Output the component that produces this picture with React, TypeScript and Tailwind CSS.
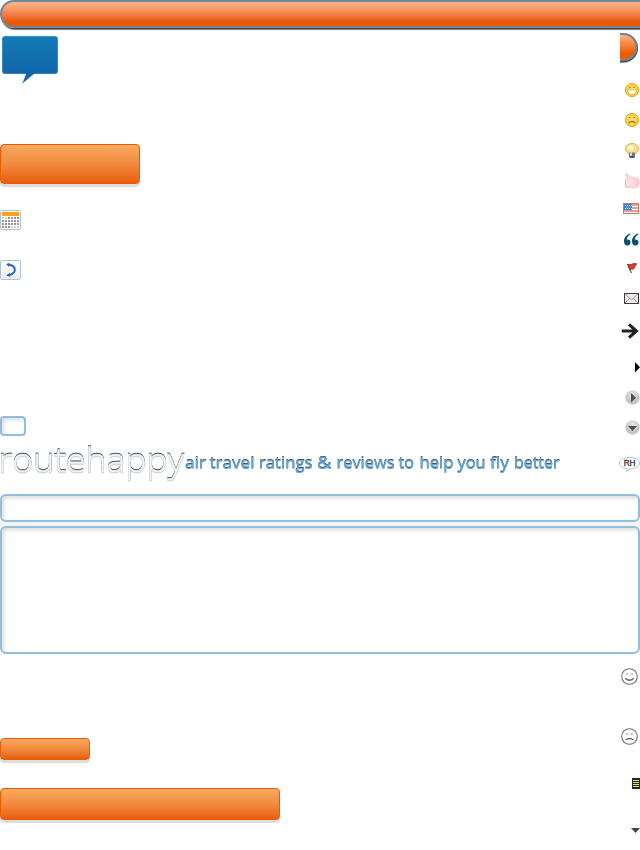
import type { ReactNode } from 'react';

const TAGLINE = [
  { word: 'air', x: 0, w: 21 },
  { word: 'travel', x: 24.5, w: 45 },
  { word: 'ratings', x: 74, w: 53.5 },
  { word: '&', x: 132, w: 14.5 },
  { word: 'reviews', x: 151.5, w: 58 },
  { word: 'to', x: 213.5, w: 15.5 },
  { word: 'help', x: 234.5, w: 34 },
  { word: 'you', x: 272.5, w: 28 },
  { word: 'fly', x: 305, w: 19 },
  { word: 'better', x: 329, w: 45.5 },
];

function Icon({ top, h, children }: { top: number; h: number; children: ReactNode }) {
  return (
    <svg className="block shrink-0" width="24" height={h} viewBox={`616 ${top} 24 ${h}`} fill="none">
      {children}
    </svg>
  );
}

function Button({ className }: { className: string }) {
  return (
    <div
      className={`shrink-0 rounded border border-[#e95b04] bg-linear-to-b from-[#f9aa60] via-[#f08a3b] to-[#e85e08] shadow-[0_3px_0_#dedede] ${className}`}
    />
  );
}

function Field({ className }: { className: string }) {
  return (
    <div
      className={`shrink-0 border-2 border-[#93bedb] bg-white shadow-[inset_2px_2px_4px_#dcdcdc] ${className}`}
    />
  );
}

function Calendar() {
  return (
    <svg className="mt-[26px] block shrink-0" width="21" height="20" viewBox="0 0 21 20">
      <rect x=".5" y=".5" width="20" height="19" rx="1.5" fill="#fff" stroke="#b1c3cf" />
      <rect x="2" y="2" width="17" height="4" fill="#fba11c" />
      {[0, 1, 2, 3].map((r) =>
        [0, 1, 2, 3, 4, 5].map((c) => (
          <rect
            key={`${r}-${c}`}
            x={2 + c * 3}
            y={7 + r * 3}
            width="2"
            height="2"
            fill={(r === 0 && c < 2) || (r === 3 && c > 2) ? '#d9d2d0' : '#989696'}
          />
        )),
      )}
    </svg>
  );
}

function Back() {
  return (
    <svg className="mt-[30px] block shrink-0" width="21" height="20" viewBox="0 0 21 20">
      <defs>
        <linearGradient id="back" x2="0" y2="1">
          <stop stopColor="#fff" />
          <stop offset="1" stopColor="#ececee" />
        </linearGradient>
      </defs>
      <rect x=".5" y=".5" width="20" height="19" rx="1.5" fill="url(#back)" stroke="#b1c3cf" />
      <path d="M8.5 4.7C13 5 14.8 7.3 14.8 9.8S13 14.3 8.5 15" fill="none" stroke="#2d68bd" strokeWidth="2" />
      <path d="M6 4l4-1-1 4zM6 15.7l3.6-3 1 4z" fill="#2d68bd" />
    </svg>
  );
}

function Bubble() {
  return (
    <svg className="mt-1 ml-px block shrink-0" width="59" height="50" viewBox="1 35 59 50">
      <defs>
        <linearGradient id="bubble" x2="0" y2="1">
          <stop stopColor="#147bb8" />
          <stop offset="1" stopColor="#1060a6" />
        </linearGradient>
      </defs>
      <path
        d="M5 36h50q3 0 3 3v32q0 3-3 3H34L22 84l4-10H5q-3 0-3-3V39q0-3 3-3z"
        fill="url(#bubble)"
        stroke="#cbdbe8"
        strokeWidth=".5"
      />
    </svg>
  );
}

function Brand() {
  return (
    <div className="mt-[6px] flex h-[44px] w-[600px] shrink-0">
      <svg className="block shrink-0 overflow-visible" width="185" height="44">
        <text
          x="-1.5"
          y="30"
          textLength="185.5"
          lengthAdjust="spacingAndGlyphs"
          fontFamily='"Open Sans", "Noto Sans", sans-serif'
          fontSize="33.5"
          fontWeight="300"
          fill="#f4f5f6"
          stroke="#f4f5f6"
          strokeWidth=".6"
          className="[filter:drop-shadow(0_-1px_0_#31485b)_drop-shadow(0_1px_0_#c6c9cc)]"
        >
          routehappy
        </text>
      </svg>
      <svg className="block shrink-0 overflow-visible" width="380" height="44">
        <text
          y="27"
          fontFamily='"Open Sans", "Noto Sans", sans-serif'
          fontSize="17"
          fontWeight="400"
          fill="#6aa9d6"
          stroke="#6aa9d6"
          strokeWidth=".2"
          className="[filter:drop-shadow(0_-1px_0_#38546d)]"
        >
          {TAGLINE.map(({ word, x, w }) => (
            <tspan key={word} x={x} textLength={w} lengthAdjust="spacingAndGlyphs">
              {word}
            </tspan>
          ))}
        </text>
      </svg>
    </div>
  );
}

function Face({ cy, sad }: { cy: number; sad?: boolean }) {
  return (
    <>
      <circle cx="632" cy={cy} r="6.7" fill="url(#gold)" stroke="#dba92c" strokeWidth=".9" />
      <path d={`M629 ${cy - 2.5}h1.6M633.4 ${cy - 2.5}h1.6`} stroke="#a57f22" strokeWidth="1" />
      {sad ? (
        <path d={`M628.6 ${cy + 3}q3.4-3.4 6.8 0`} stroke="#98700f" strokeWidth="1.2" />
      ) : (
        <path d={`M627.5 ${cy}h9q-.6 4.5-4.5 4.5t-4.5-4.5z`} fill="#fff" stroke="#c99a2a" strokeWidth=".6" />
      )}
    </>
  );
}

function OutlineFace({ cy, sad }: { cy: number; sad?: boolean }) {
  return (
    <>
      <circle cx="629.5" cy={cy} r="7.8" stroke="#707070" strokeWidth="1.1" />
      <path d={`M626.3 ${cy - 2.5}h1.4M631.2 ${cy - 2.5}h1.4`} stroke="#666" strokeWidth="1.2" />
      <path
        d={sad ? `M625.5 ${cy + 3.6}q4-3.2 8 0` : `M625.2 ${cy + 1.7}q4.3 4 8.6 0`}
        stroke="#666"
        strokeWidth="1.3"
      />
    </>
  );
}

function IconColumn() {
  return (
    <div className="flex w-6 shrink-0 flex-col">
      <Icon top={31} h={44}>
        <defs>
          <linearGradient id="cap" x2="0" y2="1">
            <stop stopColor="#ffb98a" />
            <stop offset=".75" stopColor="#e95a04" />
            <stop offset="1" stopColor="#e95a04" />
          </linearGradient>
          <radialGradient id="gold">
            <stop stopColor="#ffea80" />
            <stop offset="1" stopColor="#f5c735" />
          </radialGradient>
          <radialGradient id="disc" cy=".3">
            <stop stopColor="#e9e9e9" />
            <stop offset="1" stopColor="#c4c4c4" />
          </radialGradient>
        </defs>
        <path d="M620 35.5h3.5a13 13 0 0 1 0 26.5H620" stroke="#aaa" strokeWidth="2" />
        <path d="M620 35h3.8a13 13 0 0 1 0 26H620" stroke="#454951" strokeWidth="2.4" />
        <path d="M620 34h3.5a13 13 0 0 1 0 26H620z" fill="url(#cap)" />
        <path d="M620 34h3.5a13 13 0 0 1 0 26H620" stroke="#758591" strokeWidth="2" />
      </Icon>
      <Icon top={75} h={30}><Face cy={90} /></Icon>
      <Icon top={105} h={30}><Face cy={120} sad /></Icon>
      <Icon top={135} h={32}>
        <path d="M632 143.5c-3.8 0-6.5 2.2-6.5 5.2 0 2.8 3 3.8 3.7 6h5.6c.7-2.2 3.7-3.2 3.7-6 0-3-2.7-5.2-6.5-5.2z" fill="#fde08a" stroke="#dfaa4e" />
        <ellipse cx="630.5" cy="147.5" rx="2.8" ry="2.3" fill="#fff9dc" />
        <path d="M629 152.5h6v4.2l-1.3 1.3h-3.4l-1.3-1.3z" fill="#777" />
        <path d="M630 152.5h2v3.3h-2z" fill="#ddd" />
        <path d="M629.5 157h5" stroke="#333" />
      </Icon>
      <Icon top={167} h={30}>
        <path d="M626 174c1.5-.6 3.2 2.3 4.9 3.9h5.8c1.9 0 1.9 2 .8 2.3 2.1.1 2 2.2.6 2.3 1.5.3 1.1 2.2-.3 2.2.9.5.6 2.1-.8 2.4-2.2.7-4.7.5-6.3-.3l-3.2.8-2-.6v-6.8l2.2-.6c0-2-2.7-4.2-1.7-5.6z" fill="#ffdfe3" stroke="#f7a6b0" strokeWidth=".8" />
        <path d="M634.5 180.2h3M634.5 182.5h3.2M634.5 184.7h3" stroke="#f7a6b0" strokeWidth=".6" />
      </Icon>
      <Icon top={197} h={26}>
        <rect x="623.5" y="203.5" width="15" height="10" fill="#fff" stroke="#b98570" />
        <path d="M624 205h14M624 208h14M624 211h14" stroke="#ea7a68" strokeWidth="1.3" />
        <path d="M624 204h8v6h-8z" fill="#397bc6" />
        <path d="M625 205.5h7M625 208.5h7" stroke="#d9e9ff" strokeDasharray="1 1" />
        <path d="M626 207h6" stroke="#d9e9ff" strokeWidth=".7" strokeDasharray="1 1" />
      </Icon>
      <Icon top={223} h={32}>
        {[0, 8].map((dx) => (
          <path
            key={dx}
            transform={`translate(${dx} 0)`}
            d="M630.2 233.5c-4 1.3-6.2 4.4-6.2 7.7 0 2.7 1.3 4.3 3.3 4.3 1.9 0 3.2-1.3 3.2-3 0-1.8-1.2-2.9-2.7-2.9-.4 0-.8.1-1 .2.1-2.1 1.3-4 3.6-5.3z"
            fill="#075078"
          />
        ))}
      </Icon>
      <Icon top={255} h={28}>
        <path d="M627.5 264l4 9" stroke="#675a55" strokeWidth="1.2" />
        <path d="M627.8 264.3c3 1.6 4.4-1.7 9-.5-1.9 1.7-1.4 3.5-3.7 5.7-1-.7-2.3-.3-3.3.2z" fill="#d5432e" stroke="#7a2c24" strokeWidth=".8" />
      </Icon>
      <Icon top={283} h={30}>
        <rect x="624.5" y="293.5" width="14" height="10" fill="#f0ebe8" stroke="#3c3c3c" />
        <path d="M625 294l6.5 5.8L638 294M625 303l4.6-4.7M638 303l-4.6-4.7" stroke="#888" strokeWidth=".8" />
      </Icon>
      <Icon top={313} h={36}>
        <path d="M621.8 331h14.5M629 324.3l7.4 6.7-7.4 6.7" stroke="#202020" strokeWidth="3.1" />
      </Icon>
      <Icon top={349} h={34}><path d="M635 362l5 5.2-5 5.3z" fill="#000" /></Icon>
      <Icon top={383} h={30}>
        <circle cx="632.5" cy="397.5" r="7.2" fill="url(#disc)" />
        <path d="M631 393l5 4.7-5 4.8z" fill="#4f4f4f" />
      </Icon>
      <Icon top={413} h={30}>
        <circle cx="632.5" cy="427.5" r="7.2" fill="url(#disc)" />
        <path d="M628 426h9l-4.5 5z" fill="#4f4f4f" />
      </Icon>
      <Icon top={443} h={44}>
        <path d="M629.5 457.5c5.8 0 10 2.2 10 5.6s-4 5.4-8.5 5.7l-4.5 2.7.8-2.8c-4.5-.5-7.8-2.5-7.8-5.6 0-3.4 4.2-5.6 10-5.6z" fill="#fff" stroke="#a8c5d3" strokeWidth="1" />
        <text x="623.8" y="466" fontFamily='"Liberation Sans", Arial, sans-serif' fontSize="8.2" fontWeight="400" textLength="11.5" fill="#333" stroke="#333" strokeWidth=".3">RH</text>
      </Icon>
    </div>
  );
}

export default function App() {
  return (
    <div className="flex h-[850px] w-[640px] flex-col overflow-hidden bg-white">
      <div className="h-[31px] shrink-0">
        <div className="h-7 w-[670px] rounded-l-full border-2 border-[#758591] bg-linear-to-b from-[#ffb98a] to-[#e95a04] to-80% shadow-[1px_1px_0_#454951,1px_2px_1px_#777]" />
      </div>
      <div className="flex h-[463px] shrink-0">
        <div className="flex w-[616px] flex-col">
          <Bubble />
          <Button className="mt-[59px] h-10 w-[140px]" />
          <Calendar />
          <Back />
          <Field className="mt-[136px] h-5 w-[26px] rounded" />
          <Brand />
        </div>
        <IconColumn />
      </div>
      <div className="flex shrink-0 flex-col gap-1 bg-[linear-gradient(#f4f4f4,#f4f4f4)] bg-[length:100%_10px] bg-[position:0_25px] bg-no-repeat">
        <Field className="h-7 w-full rounded-md" />
        <Field className="h-32 w-full rounded-md" />
      </div>
      <div className="flex h-[196px] shrink-0">
        <div className="flex w-[616px] flex-col">
          <Button className="mt-[84px] h-[22px] w-[90px]" />
          <Button className="mt-7 h-8 w-[280px]" />
        </div>
        <div className="flex w-6 flex-col">
          <Icon top={654} h={46}><OutlineFace cy={676.5} /></Icon>
          <Icon top={700} h={60}><OutlineFace cy={736.5} sad /></Icon>
          <Icon top={760} h={50}>
            <rect x="632" y="778" width="8" height="11" fill="#17293c" />
            <path d="M633 780.5h6M633 782.5h6M633 784.5h6M633 786.5h6" stroke="#f5e72d" strokeWidth="1.1" />
          </Icon>
          <Icon top={810} h={40}><path d="M631 828h9l-4.5 5z" fill="#444" /></Icon>
        </div>
      </div>
    </div>
  );
}
